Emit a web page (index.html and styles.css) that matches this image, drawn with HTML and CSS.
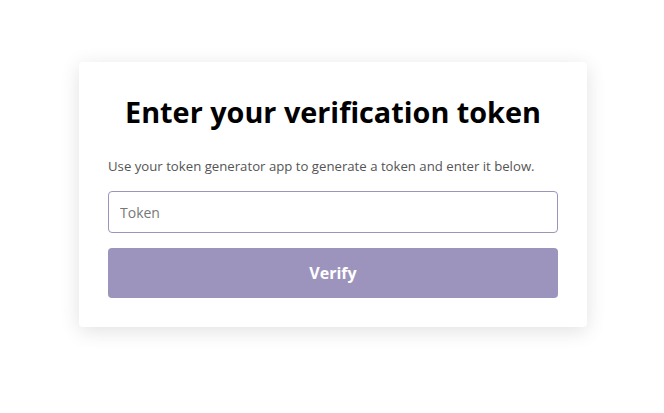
FILE: index.html
```html
<!DOCTYPE html>
<html>
<head>
<meta charset="utf-8">
<link rel="stylesheet" href="styles.css">
</head>
<body>
<main class="page">
  <section class="card">
    <h1 class="title">Enter your verification token</h1>
    <p class="desc">Use your token generator app to generate a token and enter it below.</p>
    <input class="field" type="text" placeholder="Token">
    <button class="btn" type="button">Verify</button>
  </section>
</main>
</body>
</html>
```
FILE: styles.css
```css
html, body {
  margin: 0;
  padding: 0;
  background: #fff;
  font-family: "Open Sans", "Noto Sans", sans-serif;
}
body {
  min-height: 100vh;
}
.page {
  display: flex;
  justify-content: center;
  align-items: flex-start;
  padding-top: 62px;
  padding-bottom: 40px;
  padding-left: 2px;
}
.card {
  width: 450px;
  padding: 29px;
  background: #fff;
  border-radius: 4px;
  box-shadow: 0 4px 20px rgba(0, 0, 0, 0.12);
  display: flex;
  flex-direction: column;
}
.title {
  margin: 0;
  text-align: center;
  font-size: 28.8px;
  line-height: 42px;
  font-weight: 700;
  color: #000;
}
.desc {
  margin: 23px 0 0 0;
  font-size: 13.2px;
  line-height: 20px;
  color: #555;
}
.field {
  margin-top: 15px;
  height: 42px;
  box-sizing: border-box;
  border: 1px solid #9d94bd;
  border-radius: 4px;
  padding: 0 11px;
  font-family: inherit;
  font-size: 14px;
  color: #333;
  outline: none;
}
.field::placeholder {
  color: #777;
}
.btn {
  margin-top: 15px;
  height: 50px;
  border: none;
  border-radius: 4px;
  background: #9d94bd;
  color: #fff;
  font-family: inherit;
  font-size: 16px;
  font-weight: 700;
}
```
